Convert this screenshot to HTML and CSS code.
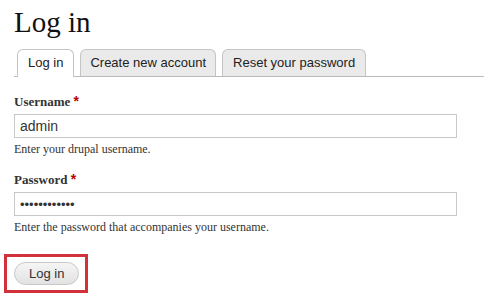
FILE: index.html
```html
<!DOCTYPE html>
<html lang="en">
<head>
  <meta charset="UTF-8" />
  <title>Log in</title>
  <link rel="stylesheet" href="styles.css">
</head>
<body>
  <h1 class="page-title">Log in</h1>

  <ul class="tabs">
    <li class="tab active">Log in</li>
    <li class="tab">Create new account</li>
    <li class="tab">Reset your password</li>
  </ul>

  <form class="login-form">
    <div class="form-item">
      <label for="name">Username <span class="required">*</span></label>
      <input type="text" id="name" value="admin" />
      <div class="description">Enter your drupal username.</div>
    </div>

    <div class="form-item">
      <label for="pass">Password <span class="required">*</span></label>
      <input type="password" id="pass" class="password" value="adminadmin12" />
      <div class="description">Enter the password that accompanies your username.</div>
    </div>

    <div class="actions">
      <div class="highlight">
        <button type="button" class="submit">Log in</button>
      </div>
    </div>
  </form>
</body>
</html>
```

FILE: styles.css
```css
body {
  margin: 0;
  padding: 0 0 0 14px;
  font-family: "Liberation Serif", serif;
  color: #222;
  background: #fff;
}

.page-title {
  font-family: "Liberation Serif", serif;
  font-weight: normal;
  font-size: 29px;
  line-height: 34px;
  margin: 5px 0 0 0;
  color: #111;
}

.tabs {
  list-style: none;
  display: flex;
  gap: 6px;
  margin: 10px 0 0 0;
  padding: 0 0 0 3px;
  border-bottom: 1px solid #bbb;
}

.tab {
  font-family: "Liberation Sans", sans-serif;
  font-size: 13px;
  line-height: 16px;
  padding: 5px 9px;
  background: #eaeaea;
  border: 1px solid #c4c4c4;
  border-bottom: none;
  border-radius: 6px 6px 0 0;
  color: #222;
}

.tab:first-child,
.tab:last-child {
  padding: 5px 10px;
}

.tab.active {
  background: #fff;
  margin-bottom: -1px;
}

.login-form {
  margin-top: 16px;
}

.form-item {
  margin-bottom: 15px;
}

.form-item label {
  display: block;
  font-weight: bold;
  font-size: 13px;
  line-height: 16px;
  color: #333;
  margin-bottom: 4px;
}

.required {
  color: #b00;
  font-family: "Liberation Sans", sans-serif;
  font-size: 14px;
}

.form-item input {
  display: block;
  box-sizing: border-box;
  width: 443px;
  height: 24px;
  margin: 0;
  padding: 2px 5px;
  border: 1px solid #c8c8c8;
  font-family: "Liberation Sans", sans-serif;
  font-size: 14px;
  color: #333;
  outline: none;
}

.form-item input.password {
  font-size: 13px;
}

.description {
  font-size: 12px;
  line-height: 14px;
  color: #333;
  margin-top: 4px;
}

.actions {
  margin-left: -10px;
  margin-top: 20px;
}

.highlight {
  display: inline-block;
  border: 3px solid #d2313b;
  padding: 5px 6px 5px 7px;
}

.submit {
  display: block;
  font-family: "Liberation Sans", sans-serif;
  font-size: 13px;
  color: #333;
  background: linear-gradient(#f5f5f5, #e2e2e2);
  border: 1px solid #c8c8c8;
  border-radius: 12px;
  padding: 3px 14px;
  height: 23px;
}
```
